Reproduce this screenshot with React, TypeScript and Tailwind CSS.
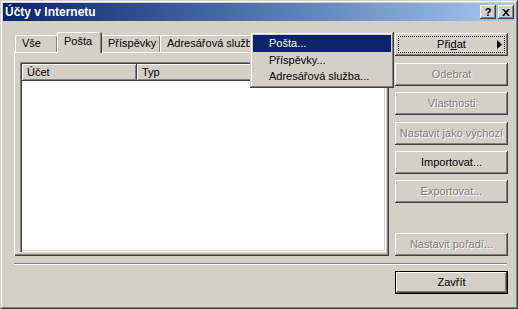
import React from 'react';

const raised =
  'shadow-[inset_-1px_-1px_#404040,inset_1px_1px_#ffffff,inset_-2px_-2px_#808080,inset_2px_2px_#d4d0c8]';
const disabledText = 'text-[#808080] [text-shadow:1px_1px_0_#ffffff]';

function DialogButton({
  label,
  disabled,
  className = '',
}: {
  label: React.ReactNode;
  disabled?: boolean;
  className?: string;
}) {
  return (
    <div
      className={`h-[23px] w-[113px] flex items-center justify-center bg-[#d4d0c8] ${raised} ${
        disabled ? disabledText : 'text-black'
      } ${className}`}
    >
      {label}
    </div>
  );
}

function Tab({ label, selected, width }: { label: string; selected?: boolean; width: string }) {
  if (selected) {
    return (
      <div
        className={`${width} h-[21px] -mb-[1px] relative z-10 bg-[#d4d0c8] border-l border-t border-white rounded-tl-[2px] rounded-tr-[2px] shadow-[inset_-1px_0_#808080,1px_0_#404040] pl-[6px] pt-[2px]`}
      >
        {label}
      </div>
    );
  }
  return (
    <div
      className={`${width} h-[17px] bg-[#d4d0c8] border-l border-t border-white rounded-tl-[2px] rounded-tr-[2px] shadow-[inset_-1px_0_#808080] pl-[6px] pt-[1px] overflow-hidden whitespace-nowrap`}
    >
      {label}
    </div>
  );
}

export default function App() {
  return (
    <div
      className="w-[518px] h-[309px] bg-[#d4d0c8] relative text-[11px] leading-[13px] text-black border border-t-[#d4d0c8] border-l-[#d4d0c8] border-b-[#404040] border-r-[#404040]"
      style={{ fontFamily: '"Liberation Sans", Arial, sans-serif' }}
    >
      <div className="h-full border border-t-white border-l-white border-b-[#808080] border-r-[#808080] p-[1px] flex flex-col">
        {/* title bar */}
        <div className="h-[18px] bg-gradient-to-r from-[#0a246a] to-[#a6caf0] flex items-center justify-between pl-[2px] pr-[1px]">
          <span className="text-white font-bold text-[12px]">Účty v Internetu</span>
          <div className="flex gap-[2px]">
            <div className={`w-[16px] h-[14px] bg-[#d4d0c8] ${raised} flex items-center justify-center font-bold text-[11px] leading-none`}>
              ?
            </div>
            <div className={`w-[16px] h-[14px] bg-[#d4d0c8] ${raised} flex items-center justify-center`}>
              <svg width="8" height="7" viewBox="0 0 8 7">
                <path d="M0 0h2l2 2 2-2h2L5 3.5 8 7H6L4 5 2 7H0l3-3.5z" fill="#000" />
              </svg>
            </div>
          </div>
        </div>

        {/* body */}
        <div className="flex-1 pl-[11px] pt-[12px]">
          <div className="flex gap-[6px]">
            <div className="w-[375px] flex flex-col">
              <div className="flex items-end h-[19px] pl-[1px]">
                <Tab label="Vše" width="w-[42px]" />
                <Tab label="Pošta" selected width="w-[44px]" />
                <Tab label="Příspěvky" width="w-[59px]" />
                <Tab label="Adresářová služba" width="w-[100px]" />
              </div>
              <div className="h-[204px] border-t border-l border-white shadow-[inset_-1px_-1px_#404040,inset_-2px_-2px_#808080] pl-[5px] pt-[9px] pr-[2px] pb-[4px]">
                <div className="h-full w-[366px] bg-white shadow-[inset_1px_1px_#808080,inset_2px_2px_#404040,inset_-1px_-1px_#ffffff,inset_-2px_-2px_#d4d0c8] p-[2px]">
                  <div className="flex h-[17px]">
                    <div className={`w-[115px] bg-[#d4d0c8] ${raised} pl-[5px] flex items-center`}>Účet</div>
                    <div className={`flex-1 bg-[#d4d0c8] ${raised} pl-[5px] flex items-center`}>Typ</div>
                  </div>
                </div>
              </div>
            </div>

            <div className="flex flex-col">
              <div className={`h-[23px] w-[113px] bg-[#d4d0c8] ${raised} p-[3px]`}>
                <div className="h-full border border-dotted border-black flex items-center justify-center relative">
                  <span>
                    Při<span className="underline">d</span>at
                  </span>
                  <svg className="absolute right-[2px] top-[3px]" width="5" height="9" viewBox="0 0 5 9">
                    <path d="M0 0l5 4.5L0 9z" fill="#000" />
                  </svg>
                </div>
              </div>
              <DialogButton label="Odebrat" disabled className="mt-[7px]" />
              <DialogButton label="Vlastnosti" disabled className="mt-[6px]" />
              <DialogButton label="Nastavit jako výchozí" disabled className="mt-[7px]" />
              <DialogButton label="Importovat..." className="mt-[6px]" />
              <DialogButton label="Exportovat..." disabled className="mt-[6px]" />
              <DialogButton label="Nastavit pořadí..." disabled className="mt-[30px]" />
            </div>
          </div>

          <div className="w-[493px] h-[2px] mt-[7px] border-t border-[#808080] border-b border-b-white" />

          <div className="flex justify-end w-[494px] mt-[6px]">
            <div className="h-[23px] w-[113px] border border-black">
              <div className={`h-full w-full bg-[#d4d0c8] ${raised} flex items-center justify-center`}>Zavřít</div>
            </div>
          </div>
        </div>
      </div>

      {/* popup menu */}
      <div className="absolute left-[249px] top-[31px] w-[144px] h-[56px] bg-[#d4d0c8] shadow-[inset_-1px_-1px_#404040,inset_1px_1px_#d4d0c8,inset_-2px_-2px_#808080,inset_2px_2px_#ffffff] p-[3px]">
        <div className="h-[17px] bg-[#0a246a] text-white pl-[16px] flex items-center">Pošta...</div>
        <div className="h-[16px] pl-[16px] flex items-center">Příspěvky...</div>
        <div className="h-[16px] pl-[16px] flex items-center">Adresářová služba...</div>
      </div>
    </div>
  );
}
